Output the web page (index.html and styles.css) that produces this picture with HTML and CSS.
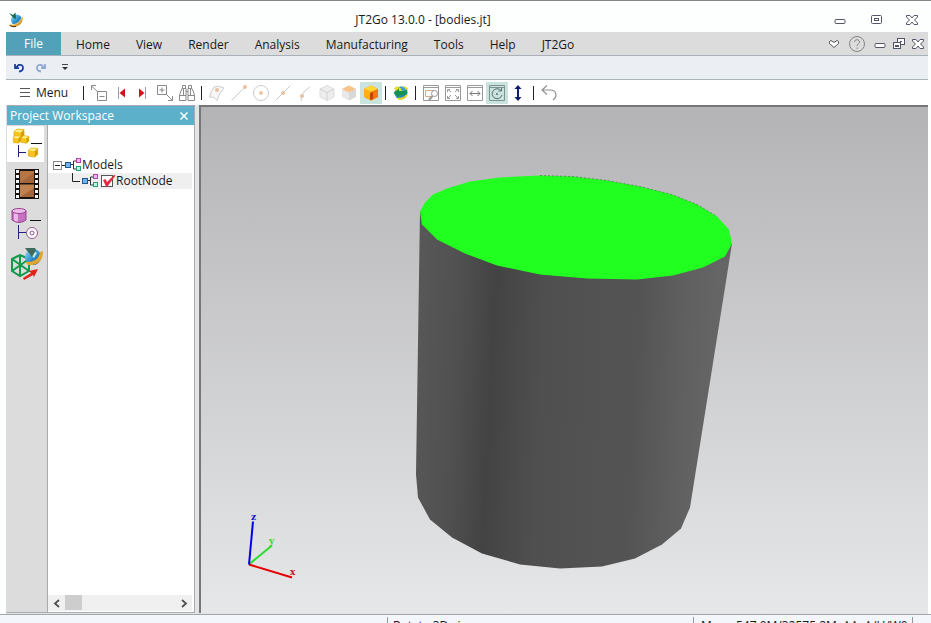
FILE: index.html
```html
<!DOCTYPE html>
<html lang="en">
<head>
    <meta charset="UTF-8">
    <meta name="viewport" content="width=device-width, initial-scale=1.0">
    <title>JT2Go 13.0.0 - [bodies.jt]</title>
    <link rel="stylesheet" href="styles.css">
</head>
<body>
    <!-- Shared symbols -->
    <svg class="symbols" aria-hidden="true">
        <defs>
            <linearGradient id="goldBall" x1="0" y1="0" x2="1" y2="1">
                <stop offset="0" stop-color="#9be0f5"/>
                <stop offset="0.5" stop-color="#2f93d0"/>
                <stop offset="1" stop-color="#0b3f7c"/>
            </linearGradient>
        </defs>
        <symbol id="logo" viewBox="0 0 16 16">
            <circle cx="8.5" cy="8" r="5.5" fill="url(#goldBall)"/>
            <path d="M1 12.5C5 14.500 13 11 14.500 4.500C16 9 11.500 15.500 5 15C3 14.800 1.500 14 1 12.500Z" fill="#e0a02c"/>
            <path d="M1 12.500C6 14 12 11 14.500 4.500" fill="none" stroke="#f6df8a"/>
            <path d="M1 1L5 3L7.500 0.500L8 7L5.500 6Z" fill="#17694f"/>
            <path d="M2 13.500Q5 15.500 8 14.500" fill="none" stroke="#4c3510"/>
        </symbol>
        <symbol id="minimize" viewBox="0 0 14 14">
            <rect x="2" y="6.500" width="10" height="4" rx="1" fill="#fff" stroke="#55556a"/>
        </symbol>
        <symbol id="close" viewBox="0 0 14 14">
            <path d="M1.500 2.500H5L7 5L9 2.500H12.500V4L9.500 7L12.500 10V11.500H9L7 9L5 11.500H1.500V10L4.500 7L1.500 4Z" fill="#fff" stroke="#55556a"/>
        </symbol>
        <symbol id="cube" viewBox="0 0 12 12">
            <path d="M1 3.500L4 1L11 1.500V8L8 11L1 10Z" fill="#f5c51e"/>
            <path d="M1 3.500L4 1L11 1.500L8 4.500Z" fill="#fff08c"/>
            <path d="M8 4.500L11 1.500V8L8 11Z" fill="#d99a00"/>
            <path d="M1 3.500L4 1L11 1.500V8L8 11L1 10Z" fill="none" stroke="#dba509" stroke-width="0.700"/>
        </symbol>
        <symbol id="node" viewBox="0 0 17 14">
            <path d="M5 6.500H8.500M12 3H8.500V11H12" fill="none" stroke="#333"/>
            <rect x="0.500" y="4.500" width="5" height="5" fill="#6cb4f2" stroke="#24568e"/>
            <rect x="11.500" y="0.500" width="4" height="4" fill="#f7b5f5" stroke="#b343ae"/>
            <rect x="11.500" y="8.500" width="4" height="4" fill="#b5f5e1" stroke="#2c9c78"/>
        </symbol>
    </svg>

    <div class="window">
        <header class="titlebar">
            <svg class="logo" viewBox="0 0 16 16" aria-hidden="true"><use href="#logo"/></svg>
            <h1 class="title">JT2Go 13.0.0 - [bodies.jt]</h1>
            <div class="window-controls">
                <button class="control" aria-label="Minimize"><svg width="14" height="14"><use href="#minimize"/></svg></button>
                <button class="control" aria-label="Maximize">
                    <svg width="14" height="14" viewBox="0 0 14 14" fill="#fff" stroke="#55556a"><rect x="2.500" y="2.500" width="10" height="8" rx="1"/><rect x="5.500" y="5.500" width="4" height="2"/></svg>
                </button>
                <button class="control" aria-label="Close"><svg width="14" height="14"><use href="#close"/></svg></button>
            </div>
        </header>

        <nav class="menubar">
            <button class="menu-item file">File</button>
            <button class="menu-item">Home</button>
            <button class="menu-item">View</button>
            <button class="menu-item">Render</button>
            <button class="menu-item">Analysis</button>
            <button class="menu-item">Manufacturing</button>
            <button class="menu-item">Tools</button>
            <button class="menu-item">Help</button>
            <button class="menu-item">JT2Go</button>
            <div class="help-controls">
                <button class="control" aria-label="Minimize ribbon">
                    <svg width="14" height="14" viewBox="0 0 14 14"><path d="M2.500 4.500L4 3.500L7 5.500L10 3.500L11.500 4.500V6.500L7 10.500L2.500 6.500Z" fill="#fff" stroke="#55555f"/></svg>
                </button>
                <button class="control" aria-label="Help">
                    <svg width="16" height="16" viewBox="0 0 16 16" fill="none" stroke="#858585"><circle cx="8" cy="8" r="7.500"/><path d="M5.500 6C5.500 3 10.500 3 10.500 6C10.500 8 8 7.700 8 10M8 11.500V12.800"/></svg>
                </button>
            </div>
            <div class="document-controls">
                <button class="control" aria-label="Minimize document"><svg width="14" height="14"><use href="#minimize"/></svg></button>
                <button class="control" aria-label="Restore document">
                    <svg width="14" height="14" viewBox="0 0 14 14" fill="#fff" stroke="#55556a"><rect x="5.500" y="1.500" width="7" height="6"/><path d="M8 4.500H10"/><rect x="1.500" y="5.500" width="7" height="6"/><rect x="3.500" y="8.500" width="3" height="1"/></svg>
                </button>
                <button class="control" aria-label="Close document"><svg width="14" height="14"><use href="#close"/></svg></button>
            </div>
        </nav>

        <div class="quickbar">
            <button class="quick" aria-label="Undo">
                <svg width="12" height="12" viewBox="0 0 12 12" fill="none" stroke="#1b3fa8" stroke-width="1.800"><path d="M2 2V6.200H6M2.500 6L5.500 3Q10 2 10 6Q10 9 6 9.500"/></svg>
            </button>
            <button class="quick" aria-label="Redo">
                <svg width="12" height="12" viewBox="0 0 12 12" fill="none" stroke="#8fa8d6" stroke-width="1.800"><path d="M10 2V6.200H6M9.500 6L6.500 3Q2 2 2 6Q2 9 6 9.500"/></svg>
            </button>
            <button class="quick" aria-label="Customize toolbar">
                <svg width="12" height="12" viewBox="0 0 12 12"><path d="M3 2.500H9" stroke="#444"/><path d="M3 5H9L6 8Z" fill="#333"/></svg>
            </button>
        </div>

        <div class="toolbar">
            <button class="menu-button">
                <svg width="10" height="10" viewBox="0 0 10 10" stroke="#555"><path d="M0 0.500H10M0 4.500H10M0 8.500H10"/></svg>
                Menu
            </button>
            <span class="separator"></span>
            <button class="tool" aria-label="Collapse">
                <svg viewBox="0 0 18 18" fill="none" stroke="#8a8a8a"><path d="M7.500 7.500H16.500V16.500H7.500ZM9.500 12.500H14.500"/><path d="M8 8L1.500 2M1.500 6V1.500H6"/></svg>
            </button>
            <button class="tool" aria-label="Previous">
                <svg viewBox="0 0 18 18"><path d="M6.500 3V15" stroke="#999bb5"/><path d="M13 4.500V13.500L7.500 9Z" fill="#d3121f"/></svg>
            </button>
            <button class="tool" aria-label="Next">
                <svg viewBox="0 0 18 18"><path d="M11.500 3V15" stroke="#999bb5"/><path d="M5 4.500V13.500L10.500 9Z" fill="#d3121f"/></svg>
            </button>
            <button class="tool" aria-label="Zoom to selection">
                <svg viewBox="0 0 18 18" fill="none" stroke="#8a8a8a"><path d="M1.500 1.500H10.500V10.500H1.500ZM6 3.500V8.500M3.500 6H8.500"/><path d="M10 10L16 16M16.500 12V16.500H12"/></svg>
            </button>
            <button class="tool" aria-label="Find">
                <svg viewBox="0 0 18 18" fill="none" stroke="#8a8a8a"><path d="M1.500 11L4 4.500H8V16.500H1.500ZM16.500 11L14 4.500H10V16.500H16.500ZM1.500 11.500H8M10 11.500H16.500M4.500 4V1.500H7.500V4M10.500 4V1.500H13.500V4M8 7.500H10M5.500 5V11M12.500 5V11"/></svg>
            </button>
            <span class="separator"></span>
            <button class="tool" aria-label="Face">
                <svg viewBox="0 0 18 18" fill="#f7f7f7" stroke="#cdcdcd"><path d="M6 3Q10 1 16 4Q11 9 9 16.500Q6 12 1.500 13Q3 7 6 3Z"/><circle cx="9" cy="6" r="2" fill="#e9bf9c" stroke="none"/></svg>
            </button>
            <button class="tool" aria-label="End point">
                <svg viewBox="0 0 18 18"><path d="M1.500 16.500L15 3" stroke="#ccc"/><circle cx="15" cy="3" r="2" fill="#ecc09c"/></svg>
            </button>
            <button class="tool" aria-label="Center">
                <svg viewBox="0 0 18 18"><circle cx="9" cy="9" r="7.500" fill="none" stroke="#ccc"/><circle cx="9" cy="9" r="2" fill="#efc6a4"/></svg>
            </button>
            <button class="tool" aria-label="Mid point">
                <svg viewBox="0 0 18 18"><path d="M1.500 16.500L16.500 1.500" stroke="#ccc"/><circle cx="9" cy="9" r="2" fill="#ecc09c"/></svg>
            </button>
            <button class="tool" aria-label="Point on curve">
                <svg viewBox="0 0 18 18"><path d="M5 17Q5 8 14 3" fill="none" stroke="#ccc"/><circle cx="6" cy="12" r="2" fill="#ecc09c"/></svg>
            </button>
            <button class="tool" aria-label="Body">
                <svg viewBox="0 0 18 18"><path d="M2 5L9 1.500L16 5V13L9 16.500L2 13Z" fill="#ededed" stroke="#ddd"/><path d="M2 5L9 8.500L16 5M9 8.500V16.500" fill="none" stroke="#d2d2d2"/></svg>
            </button>
            <button class="tool" aria-label="Face body">
                <svg viewBox="0 0 18 18"><path d="M2 5L9 1.500L16 5V13L9 16.500L2 13Z" fill="#e8e8e8"/><path d="M2 5L9 1.500L16 5L9 8.500Z" fill="#f7c48c"/><path d="M9 8.500L16 5V13L9 16.500Z" fill="#d8d8d8"/></svg>
            </button>
            <button class="tool active" aria-label="Solid">
                <svg viewBox="0 0 18 18"><path d="M2 5L9 1.500L16 5V13L9 16.500L2 13Z" fill="#f78f12"/><path d="M2 5L9 1.500L16 5L9 8Z" fill="#ffd634"/><path d="M2 5L9 8V16.500L2 13Z" fill="#ffae18"/><path d="M9 8L16 5V13L9 16.500Z" fill="#f0780f"/><path d="M8 9L11 8V15L8 16Z" fill="#c84208"/></svg>
            </button>
            <span class="separator"></span>
            <button class="tool" aria-label="Update">
                <svg viewBox="0 0 18 18"><circle cx="9" cy="9" r="6.500" fill="#2688c4"/><path d="M2 4L6 2L8 4L12 2L16 4L15 8H4Z" fill="#e7dc2e"/><path d="M8 3Q13 2 14 7H10Z" fill="#3aa0d8"/><path d="M1.500 9L7 4.500V7H11Q14 7 15 5Q16 11 10 11.500H7V13.500Z" fill="#169153"/><path d="M6 14.500Q11 16 15 11" fill="none" stroke="#ecd51f" stroke-width="2"/></svg>
            </button>
            <span class="separator"></span>
            <button class="tool" aria-label="Zoom area">
                <svg viewBox="0 0 18 18" fill="none" stroke="#999"><path d="M1.500 1.500H16.500V16.500H1.500ZM1.500 3.500H16.500"/><path d="M10 12.500H3.500V6.500H12" stroke="#dda885"/><circle cx="12.500" cy="9.500" r="3"/><path d="M10.500 12L7 16" stroke-width="2"/></svg>
            </button>
            <button class="tool" aria-label="Fit">
                <svg viewBox="0 0 18 18" fill="none" stroke="#999"><path d="M1.500 1.500H16.500V16.500H1.500ZM1.500 3.500H16.500"/><path d="M7 8L4 5.500M3.500 8V5.500H6M11 8L14 5.500M12 5.500H14.500V8M7 11L4 14M3.500 12V14.500H6M11 11L14 14M12 14.500H14.500V12"/></svg>
            </button>
            <button class="tool" aria-label="Pan">
                <svg viewBox="0 0 18 18" fill="none" stroke="#999"><path d="M1.500 1.500H16.500V16.500H1.500ZM1.500 3.500H16.500"/><path d="M4 9.500H14M6.500 7L4 9.500L6.500 12M11.500 7L14 9.500L11.500 12" stroke="#777"/></svg>
            </button>
            <button class="tool active" aria-label="Rotate">
                <svg viewBox="0 0 18 18" fill="none" stroke="#7e9292"><path d="M1.500 1.500H16.500V16.500H1.500ZM1.500 3.500H16.500"/><path d="M13 6.500A5 5 0 1 0 14 11M13.500 4V7H10.500" stroke="#587373"/><circle cx="9" cy="10" r="1" fill="#587373" stroke="none"/></svg>
            </button>
            <button class="tool" aria-label="Walk">
                <svg viewBox="0 0 18 18"><path d="M7 4H9V14H7Z" fill="#0b1d6b"/><path d="M8 1L11.500 5H4.500ZM8 17L11.500 13H4.500Z" fill="#0b1d6b"/></svg>
            </button>
            <span class="separator"></span>
            <button class="tool" aria-label="Previous view">
                <svg viewBox="0 0 18 18" fill="none" stroke="#929292" stroke-width="1.200"><path d="M7 1.500L2 6L7 10.500M2 6H11Q16 6.500 16 11Q16 14 13 16"/></svg>
            </button>
        </div>

        <main class="workspace">
            <section class="panel">
                <div class="panel-header">
                    <h2 class="panel-title">Project Workspace</h2>
                    <button class="panel-close" aria-label="Close panel">
                        <svg width="8" height="8" viewBox="0 0 8 8" stroke="#fff" stroke-width="1.500"><path d="M0.500 0.500L7.500 7.500M7.500 0.500L0.500 7.500"/></svg>
                    </button>
                </div>
                <div class="panel-body">
                    <div class="tabs">
                        <button class="tab selected" aria-label="Project">
                            <svg viewBox="0 0 34 34">
                                <use href="#cube" x="4" y="1" width="12" height="12"/><use href="#cube" x="3" y="8" width="10" height="9"/><use href="#cube" x="11" y="8" width="10" height="9"/>
                                <path d="M22 16.500H33" stroke="#111"/><path d="M9.500 18V30M10 25.500H17" stroke="#20207c"/>
                                <use href="#cube" x="18" y="20" width="12" height="11"/>
                            </svg>
                        </button>
                        <button class="tab" aria-label="Snapshots">
                            <svg viewBox="0 0 34 34">
                                <path d="M6 2H30V32H6Z" fill="#17120f"/><path d="M11 4H25V16H11Z" fill="#b77541"/><path d="M11 17.500H25V30H11Z" fill="#c1824d"/>
                                <path d="M11 16L25 6V16ZM11 30L25 21V30Z" fill="#a3653a"/>
                                <path d="M8.500 3V32M27.500 3V32" stroke="#f5f5f5" stroke-width="3" stroke-dasharray="3 2"/>
                            </svg>
                        </button>
                        <button class="tab" aria-label="Product data">
                            <svg viewBox="0 0 34 34">
                                <path d="M3 4V13Q10 18 17 13V4Z" fill="#c771c2"/><path d="M5 5V14L9 15V6Z" fill="#eab8e8"/><ellipse cx="10" cy="4" rx="7" ry="2.500" fill="#edb9e9" stroke="#98448f"/><path d="M3 4V13Q10 18 17 13V4" fill="none" stroke="#98448f"/>
                                <path d="M21 13.500H32" stroke="#111"/><path d="M9.500 18V32M10 25.500H17" stroke="#20207c"/>
                                <circle cx="23" cy="26" r="5.500" fill="#fff" stroke="#98548f"/><circle cx="23" cy="26" r="2" fill="none" stroke="#98548f"/>
                            </svg>
                        </button>
                        <button class="tab" aria-label="Models">
                            <svg viewBox="0 0 34 34">
                                <path d="M3 12L11 8L20 12V24L11 29L3 24ZM3 12L20 24M20 12L3 24M11 8V29" fill="none" stroke="#13994a" stroke-width="2"/>
                                <circle cx="24" cy="10" r="8" fill="url(#goldBall)"/>
                                <path d="M16 15Q29 16 31 5L34 4Q34 19 19 18Z" fill="#e3a531"/>
                                <path d="M20 6Q24 3 28 6L25 11Z" fill="#bfeaf6"/>
                                <path d="M16 1L26 1L27 3L23 10Z" fill="#3f6b5c"/>
                                <path d="M14 31L22 26L20 24L29 22L25 30L24 28L15 33Z" fill="#e32118"/>
                            </svg>
                        </button>
                    </div>
                    <div class="tree-area">
                        <ul class="tree">
                            <li class="tree-row">
                                <button class="expander" aria-label="Collapse Models">
                                    <svg width="12" height="11" viewBox="0 0 12 11" fill="none"><rect x="0.500" y="1.500" width="8" height="8" fill="#fff" stroke="#888"/><path d="M2 5.500H7M9 5.500H12" stroke="#222"/></svg>
                                </button>
                                <svg class="node-icon" viewBox="0 0 17 14"><use href="#node"/></svg>
                                <span>Models</span>
                            </li>
                            <li class="tree-row child">
                                <svg class="branch" width="9" height="16" viewBox="0 0 9 16" fill="none" stroke="#222"><path d="M0.500 0V8.500H8"/></svg>
                                <svg class="node-icon" viewBox="0 0 17 14"><use href="#node"/></svg>
                                <label class="check">
                                    <input type="checkbox" checked>
                                    <svg width="16" height="14" viewBox="0 0 16 14"><path d="M3 6L5.500 5L7 8L14 1L15.500 1.500L7.500 12.500H6Z" fill="#e62943"/></svg>
                                    RootNode
                                </label>
                            </li>
                        </ul>
                        <div class="scrollbar">
                            <button class="scroll-arrow" aria-label="Scroll left"><svg width="8" height="9" viewBox="0 0 8 9" fill="none" stroke="#505050" stroke-width="1.800"><path d="M6 1L2 4.500L6 8"/></svg></button>
                            <div class="track"><div class="thumb"></div></div>
                            <button class="scroll-arrow" aria-label="Scroll right"><svg width="8" height="9" viewBox="0 0 8 9" fill="none" stroke="#505050" stroke-width="1.800"><path d="M2 1L6 4.500L2 8"/></svg></button>
                        </div>
                    </div>
                </div>
            </section>

            <section class="viewport">
                <svg class="scene" viewBox="201 107 727 505" role="img" aria-label="Cylinder model">
                    <defs>
                        <linearGradient id="side" gradientUnits="userSpaceOnUse" x1="416" y1="390" x2="712" y2="405">
                            <stop offset="0" stop-color="#575757"/>
                            <stop offset="0.130" stop-color="#505050"/>
                            <stop offset="0.250" stop-color="#434343"/>
                            <stop offset="0.420" stop-color="#4f4f4f"/>
                            <stop offset="0.740" stop-color="#545454"/>
                            <stop offset="0.900" stop-color="#606060"/>
                            <stop offset="1" stop-color="#656565"/>
                        </linearGradient>
                    </defs>
                    <polygon fill="url(#side)" points="420,211 416,474 418,497 430,519 452,537 482,553 520,564 560,568 602,566 635,558 662,544 681,528 690,507 732,243 600,200"/>
                    <polygon fill="#20ff20" points="420,211 425,202 433,194 447,188 470,181 500,177 540,175 573,176 607,180 640,186 672,194 697,204 717,216 729,229 732,243 725,256 703,267 673,275 637,279 587,278 540,274 497,265 465,253 437,239 422,224"/>
                    <path d="M540 175L573 176L607 180L640 186L672 194L697 204L717 216" fill="none" stroke="#444" stroke-width="0.500" stroke-dasharray="2 2"/>
                    <!-- Axis triad -->
                    <g fill="none" stroke-width="2">
                        <path d="M250 563L272 545" stroke="#2bdc2b"/>
                        <path d="M249 564L292 577" stroke="#e60000"/>
                        <path d="M249 564L253 521" stroke="#0000e6"/>
                    </g>
                    <g class="axis-labels">
                        <text x="251" y="519" fill="#1414c8">z</text>
                        <text x="269" y="543" fill="#2bdc2b">y</text>
                        <text x="290" y="574" fill="#c81428">x</text>
                    </g>
                </svg>
            </section>
        </main>

        <footer class="statusbar">
            <span class="status"></span>
            <span class="status mode">Rotate 3D view</span>
            <span class="status memory">Mem: 547.0M/32575.2M, AA: A/H/W0</span>
            <span class="status grip"></span>
        </footer>
    </div>
</body>
</html>
```
FILE: styles.css
```css
* {
    box-sizing: border-box;
}

body {
    margin: 0;
    font-family: "Open Sans", "Noto Sans", sans-serif;
    font-size: 12px;
    line-height: 16px;
    color: #1a1a1a;
    background-color: #fdfefe;
}

button {
    display: flex;
    align-items: center;
    justify-content: center;
    border: none;
    padding: 0;
    background: transparent;
    color: inherit;
    font: inherit;
    cursor: pointer;
}

h1, h2 {
    margin: 0;
    font-size: 12px;
    font-weight: normal;
}

.symbols {
    position: absolute;
    width: 0;
    height: 0;
}

.window {
    display: flex;
    flex-direction: column;
    height: 100vh;
    border-top: 1px solid #85868a;
    overflow: hidden;
}

/* Title bar */
.titlebar {
    display: flex;
    align-items: center;
    flex: 0 0 31px;
    padding: 6px 1px 0 8px;
}

.logo {
    width: 16px;
    height: 16px;
}

.title {
    flex: 1;
    text-align: center;
}

.window-controls, .help-controls, .document-controls {
    display: flex;
}

.window-controls .control {
    width: 36px;
}

/* Menu bar */
.menubar {
    display: flex;
    flex: 0 0 24px;
    margin: 0 3px 0 6px;
    background-color: #dcdcdc;
    border-bottom: 1px solid #a9b0b8;
}

.menu-item {
    padding: 2px 13px 0;
}

.file {
    width: 55px;
    margin-right: 2px;
    padding: 0;
    background-color: #53a1b9;
    color: #fff;
}

.help-controls {
    gap: 4px;
    margin-left: auto;
    margin-right: 4px;
}

.help-controls .control, .document-controls .control {
    width: 19px;
}

.document-controls {
    margin-right: 1px;
}

/* Quick access */
.quickbar {
    display: flex;
    flex: 0 0 24px;
    align-items: center;
    gap: 8px;
    margin: 0 3px 0 6px;
    padding-left: 6px;
    background-color: #ebeff4;
    border-bottom: 1px solid #a9b4b8;
}

.quick {
    width: 14px;
    height: 20px;
}

.quick:last-child {
    margin-left: 2px;
}

/* Toolbar */
.toolbar {
    display: flex;
    flex: 0 0 25px;
    align-items: center;
    padding-left: 6px;
    background-color: #fff;
}

.menu-button {
    width: 74px;
    gap: 6px;
    padding-left: 2px;
}

.separator {
    width: 1px;
    height: 14px;
    margin: 0 4px 0 3px;
    background-color: #222;
}

.tool {
    width: 22px;
    height: 22px;
}

.tool svg {
    width: 18px;
    height: 18px;
}

.active {
    background-color: #cbe3df;
}

/* Workspace */
.workspace {
    display: flex;
    flex: 1;
    min-height: 0;
    margin: 0 3px 0 6px;
    padding-bottom: 1px;
    background-color: #e4e4e4;
}

.panel {
    display: flex;
    flex-direction: column;
    flex: 0 0 189px;
    border: 1px solid #a8acb0;
    border-left-color: #dcdcdc;
}

.panel-header {
    display: flex;
    align-items: center;
    justify-content: space-between;
    flex: 0 0 19px;
    padding: 0 6px 0 3px;
    background-color: #5cb0ca;
    color: #fff;
}

.panel-body {
    display: flex;
    flex: 1;
    min-height: 0;
}

.tabs {
    display: flex;
    flex-direction: column;
    gap: 4px;
    flex: 0 0 41px;
    padding: 1px 3px 0 0;
    background-color: #dcdcdc;
    border-right: 1px solid #a8acb0;
}

.tab {
    height: 36px;
}

.tab svg {
    width: 34px;
    height: 34px;
}

.selected {
    background-color: #fff;
}

.tree-area {
    display: flex;
    flex-direction: column;
    flex: 1;
    min-width: 0;
    padding: 0 2px 1px 0;
    background-color: #fff;
}

.tree {
    flex: 1;
    margin: 0;
    padding: 32px 0 0;
    list-style: none;
}

.tree-row {
    display: flex;
    align-items: center;
    height: 16px;
    padding-left: 4px;
}

.child {
    padding-left: 24px;
    background-color: #efefef;
}

.expander {
    width: 13px;
    height: 16px;
}

.branch {
    margin-right: 1px;
}

.node-icon {
    width: 17px;
    height: 14px;
}

.check {
    display: grid;
    grid-template-columns: 16px auto;
    align-items: center;
    margin-left: 1px;
}

.check input {
    grid-area: 1 / 1;
    appearance: none;
    width: 12px;
    height: 12px;
    margin: 0 1px;
    background-color: #fff;
    border: 1px solid #555;
}

.check svg {
    grid-area: 1 / 1;
}

.scrollbar {
    display: flex;
    flex: 0 0 16px;
    background-color: #f0f0f0;
}

.scroll-arrow {
    width: 17px;
}

.track {
    flex: 1;
}

.thumb {
    width: 17px;
    height: 15px;
    background-color: #cdcdcd;
}

/* 3D view */
.viewport {
    flex: 1;
    min-width: 0;
    margin-left: 4px;
    border: solid #77777b;
    border-width: 2px 0 0 2px;
    background: linear-gradient(#b4b4b6, #e6e7e9);
}

.scene {
    display: block;
    width: 100%;
    height: 100%;
}

.axis-labels {
    font-family: "DejaVu Serif", serif;
    font-size: 9px;
    font-weight: bold;
}

/* Status bar */
.statusbar {
    display: flex;
    flex: 0 0 9px;
    border-top: 1px solid #a2a5aa;
    background-color: #f3f7fb;
    overflow: hidden;
}

.status {
    flex: 0 0 388px;
    height: 20px;
    margin-top: 2px;
    padding: 1px 0 0 5px;
    border-right: 1px solid #999;
    white-space: nowrap;
}

.mode {
    flex: 1;
}

.memory {
    flex: 0 0 219px;
    padding-left: 7px;
}

.grip {
    flex: 0 0 18px;
    border: none;
}
```
